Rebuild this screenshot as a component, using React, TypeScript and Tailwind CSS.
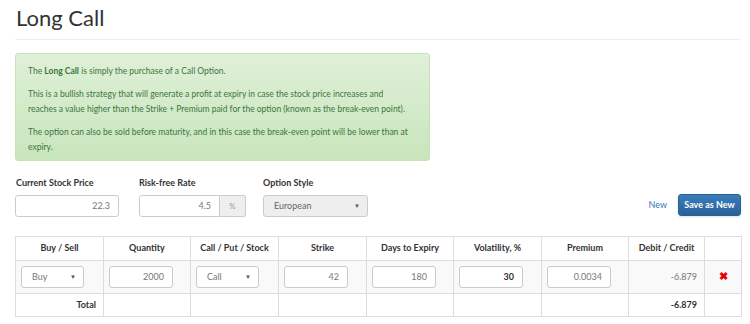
const font = { fontFamily: "Lato, 'Liberation Sans', sans-serif" };

const Caret = () => <span className="text-[6px] text-[#555] leading-none">▼</span>;

const Input = ({ value, bold, w }: { value: string; bold?: boolean; w: string }) => (
  <div
    className={`${w} h-[22px] rounded-[3px] border border-[#ccc] bg-white flex items-center justify-end pr-[8px] text-[9px] ${
      bold ? "font-bold text-[#333]" : "text-[#777]"
    }`}
  >
    {value}
  </div>
);

const Select = ({ value, w }: { value: string; w: string }) => (
  <div
    className={`${w} h-[22px] rounded-[3px] border border-[#ccc] bg-white flex items-center justify-between pl-[10px] pr-[7px] text-[9px] text-[#777]`}
  >
    <span>{value}</span>
    <Caret />
  </div>
);

const headers = [
  "Buy / Sell",
  "Quantity",
  "Call / Put / Stock",
  "Strike",
  "Days to Expiry",
  "Volatility, %",
  "Premium",
  "Debit / Credit",
  "",
];
const widths = ["w-[88px]", "w-[87px]", "w-[88px]", "w-[88px]", "w-[87px]", "w-[88px]", "w-[87px]", "w-[76px]", "w-[37px]"];

const cell = "border border-[#ddd] px-[5px]";

export default function App() {
  return (
    <div className="w-[750px] h-[324px] overflow-hidden bg-white pl-[15px] pr-[9px] text-[#333]" style={font}>
      <h1 className="pt-[4px] pb-[7px] border-b border-[#eee] text-[22px] leading-[28px] pl-[1px]">Long Call</h1>

      <div className="mt-[13px] w-[415px] h-[108px] rounded-[3px] border border-[#c6e2b8] bg-gradient-to-b from-[#dff0d8] to-[#c8e5bc] pl-[12px] pr-[20px] pt-[10px] text-[8.5px] leading-[15px] text-[#3c763d]">
        <p>
          The <b>Long Call</b> is simply the purchase of a Call Option.
        </p>
        <p className="mt-[8px]">
          This is a bullish strategy that will generate a profit at expiry in case the stock price increases and reaches
          a value higher than the Strike + Premium paid for the option (known as the break-even point).
        </p>
        <p className="mt-[8px]">
          The option can also be sold before maturity, and in this case the break-even point will be lower than at
          expiry.
        </p>
      </div>

      <div className="mt-[15px] flex items-end">
        <div className="w-[124px]">
          <div className="text-[9px] font-bold mb-[5px] pl-[1px]">Current Stock Price</div>
          <Input value="22.3" w="w-[104px]" />
        </div>
        <div className="w-[124px]">
          <div className="text-[9px] font-bold mb-[5px]">Risk-free Rate</div>
          <div className="flex w-[107px] h-[22px]">
            <div className="flex-1 rounded-l-[3px] border border-[#ccc] flex items-center justify-end pr-[8px] text-[9px] text-[#777]">
              4.5
            </div>
            <div className="w-[26px] rounded-r-[3px] border border-l-0 border-[#ccc] bg-[#eee] flex items-center justify-center text-[8px] text-[#999]">
              %
            </div>
          </div>
        </div>
        <div className="w-[106px]">
          <div className="text-[9px] font-bold mb-[5px]">Option Style</div>
          <div className="w-[105px] h-[22px] rounded-[3px] border border-[#ccc] bg-[#eee] flex items-center justify-between pl-[10px] pr-[7px] text-[9px] text-[#666]">
            <span>European</span>
            <Caret />
          </div>
        </div>
        <div className="flex-1 flex justify-end items-center gap-[11px] pb-[1px]">
          <span className="text-[9px] text-[#337ab7]">New</span>
          <button className="h-[22px] w-[63px] rounded-[3px] border border-[#2a5f8f] bg-gradient-to-b from-[#3a7cbc] to-[#2b6199] text-white text-[9px] font-bold shadow-sm">
            Save as New
          </button>
        </div>
      </div>

      <table className="mt-[19px] w-[726px] table-fixed border-collapse text-[9px]">
        <thead>
          <tr className="h-[24px]">
            {headers.map((h, i) => (
              <th key={i} className={`${widths[i]} border border-[#ddd] font-bold text-center text-[#333] p-0`}>
                {h}
              </th>
            ))}
          </tr>
        </thead>
        <tbody>
          <tr className="h-[33px] bg-[#f9f9f9]">
            <td className={cell}>
              <Select value="Buy" w="w-[63px]" />
            </td>
            <td className={cell}>
              <Input value="2000" w="w-[64px]" />
            </td>
            <td className={cell}>
              <Select value="Call" w="w-[63px]" />
            </td>
            <td className={cell}>
              <Input value="42" w="w-[64px]" />
            </td>
            <td className={cell}>
              <Input value="180" w="w-[64px]" />
            </td>
            <td className={cell}>
              <Input value="30" bold w="w-[64px]" />
            </td>
            <td className={cell}>
              <Input value="0.0034" w="w-[64px]" />
            </td>
            <td className="border border-[#ddd] pr-[7px] text-right text-[#777]">-6.879</td>
            <td className="border border-[#ddd] text-center text-[#e00] font-bold text-[11px]">✖</td>
          </tr>
          <tr className="h-[23px]">
            <td className="border border-[#ddd] pr-[7px] text-right font-bold">Total</td>
            <td className="border border-[#ddd]" />
            <td className="border border-[#ddd]" />
            <td className="border border-[#ddd]" />
            <td className="border border-[#ddd]" />
            <td className="border border-[#ddd]" />
            <td className="border border-[#ddd]" />
            <td className="border border-[#ddd] pr-[7px] text-right font-bold">-6.879</td>
            <td className="border border-[#ddd]" />
          </tr>
        </tbody>
      </table>
    </div>
  );
}
